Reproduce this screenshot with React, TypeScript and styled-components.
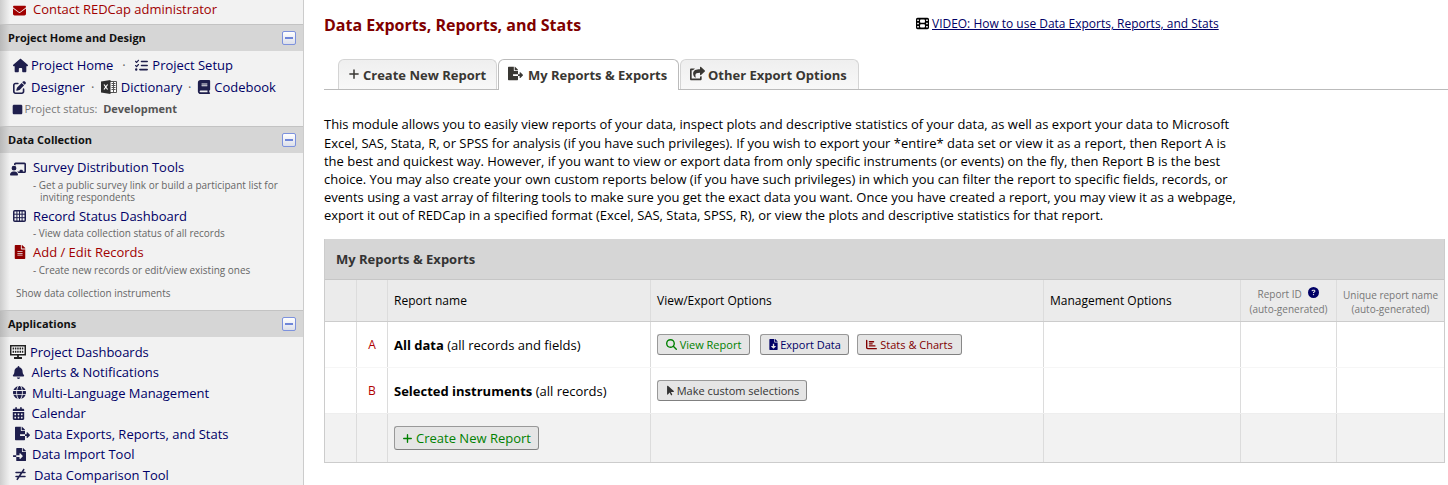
import React from 'react';
import styled, { createGlobalStyle } from 'styled-components';
import {
  FaEnvelope, FaHouse, FaListCheck, FaPenToSquare, FaBook, FaSquare, FaChalkboardUser,
  FaBell, FaGlobe, FaCalendarDays, FaNotEqual, FaPlus, FaChartBar,
  FaFilm, FaMagnifyingGlass, FaArrowPointer, FaCircleQuestion,
} from 'react-icons/fa6';
import { FaFileAlt, FaShareSquare, FaFileDownload, FaFileExport, FaFileImport } from 'react-icons/fa';

const Global = createGlobalStyle`
  * { box-sizing: border-box; }
  body { margin: 0; background: #fff; color: #000; overflow: hidden; font: 12.98px/18px "Open Sans", sans-serif; }
  svg { display: block; flex: none; }
`;

const Page = styled.div`
  display: flex;
  height: 485px;
  overflow: hidden;
`;

const Sidebar = styled.nav`
  width: 304px;
  flex: none;
  border-right: 1px solid #ccc;
  background: #f2f2f2;
  background-image: linear-gradient(to right, #cdcdcd, #f2f2f2 10px);
`;

const SectionHead = styled.h2`
  display: flex;
  align-items: center;
  justify-content: space-between;
  height: 27px;
  margin: 0;
  padding: 0 7px 1px 8px;
  border-top: 1px solid #c3c3c3;
  background: linear-gradient(to right, #b9b9b9, #d6d6d6 10px);
  font-size: 11px;
  font-weight: 700;
  color: #111;
`;

const Collapse = styled.span`
  display: flex;
  align-items: center;
  justify-content: center;
  width: 14px;
  height: 14px;
  margin-top: 1px;
  border: 1px solid #7d92dd;
  border-radius: 2px;
  background: linear-gradient(#fff, #dcdfea);
  &::after { content: ''; width: 8px; height: 2px; background: #6f86d8; }
`;

const SectionBody = styled.div<{ $top: number; $height: number }>`
  height: ${(p) => p.$height}px;
  padding-top: ${(p) => p.$top}px;
`;

const Row = styled.div<{ $h?: number }>`
  display: flex;
  align-items: center;
  height: ${(p) => p.$h ?? 20.5}px;
  white-space: nowrap;
`;

const Slot = styled.span<{ $x: number; $w: number; $color?: string; $dy?: number }>`
  display: flex;
  width: ${(p) => p.$w}px;
  padding-left: ${(p) => p.$x}px;
  margin-top: ${(p) => p.$dy ?? 0}px;
  flex: none;
  color: ${(p) => p.$color ?? '#1f1f4d'};
`;

const Link = styled.a<{ $red?: boolean }>`
  color: ${(p) => (p.$red ? '#a00000' : '#000066')};
`;

const Dot = styled.span<{ $w: number }>`
  width: ${(p) => p.$w}px;
  text-align: center;
  color: #666;
`;

const Status = styled.span`
  font-size: 11px;
  color: #777;
  b { margin-left: 3px; color: #555; }
`;

const Note = styled.p<{ $x?: number; $top?: number; $bottom?: number }>`
  margin: ${(p) => p.$top ?? 0}px 0 ${(p) => p.$bottom ?? 0}px ${(p) => p.$x ?? 40}px;
  text-indent: ${(p) => (p.$x ? 0 : -7)}px;
  font-size: 9.97px;
  line-height: 12px;
  color: #666;
`;

const Main = styled.main`
  flex: 1;
  min-width: 0;
  padding-left: 20px;
`;

const TitleBar = styled.header`
  display: flex;
  height: 59px;
  padding-top: 14px;
`;

const Title = styled.h1`
  width: 592px;
  margin: 0;
  font-size: 16px;
  line-height: 22px;
  font-weight: 700;
  color: #800000;
`;

const Video = styled.div`
  display: flex;
  align-items: flex-start;
  gap: 3px;
  font-size: 11.98px;
  line-height: 20px;
  svg { margin-top: 3px; }
  a { color: #000066; text-decoration: underline; }
`;

const Tabs = styled.div`
  display: flex;
  align-items: flex-end;
  height: 31px;
  padding-left: 14px;
  border-bottom: 1px solid #bbb;
`;

const Tab = styled.div<{ $w: number; $active?: boolean; $gap?: number }>`
  display: flex;
  align-items: center;
  gap: ${(p) => (p.$active ? 5 : 3)}px;
  width: ${(p) => p.$w}px;
  height: ${(p) => (p.$active ? 31 : 30)}px;
  margin-bottom: ${(p) => (p.$active ? -1 : 0)}px;
  margin-right: ${(p) => p.$gap ?? 0}px;
  padding: 0 0 ${(p) => (p.$active ? 1 : 0)}px 9px;
  border: 1px solid ${(p) => (p.$active ? '#bbb' : '#d4d4d4')};
  border-bottom: 0;
  border-radius: 6px 6px 0 0;
  background: ${(p) => (p.$active ? '#fff' : 'linear-gradient(#efefef, #f8f8f8)')};
  font-size: 13px;
  font-weight: 700;
  color: #393733;
  white-space: nowrap;
  svg { margin-top: -2px; }
`;

const Intro = styled.p`
  margin: 25px 0 14px;
  padding-top: 0.4px;
  height: 110px;
  line-height: 18.2px;
  white-space: nowrap;
`;

const Table = styled.section`
  width: 1121px;
  border: solid #ccc;
  border-width: 0 1px 1px;
`;

const TableTitle = styled.div`
  height: 41px;
  padding: 11px 11px 0;
  border-bottom: 1px solid #c6c6c6;
  background: #d6d6d6;
  font-size: 13px;
  font-weight: 700;
  color: #333;
`;

const Line = styled.div<{ $h: number; $bg?: string; $edge?: string; $head?: boolean }>`
  display: grid;
  grid-template-columns: 32px 31px 263px 393px 197px 96px 107px;
  height: ${(p) => p.$h}px;
  border-bottom: ${(p) => (p.$edge ? `1px solid ${p.$edge}` : '0')};
  background: ${(p) => p.$bg ?? '#fff'};
  font-size: ${(p) => (p.$head ? 12 : 13)}px;
`;

const Cell = styled.div<{ $letter?: boolean }>`
  display: flex;
  align-items: center;
  padding-left: ${(p) => (p.$letter ? 0 : 6)}px;
  justify-content: ${(p) => (p.$letter ? 'center' : 'flex-start')};
  color: ${(p) => (p.$letter ? '#b00000' : '#000')};
  font-size: ${(p) => (p.$letter ? '12px' : 'inherit')};
  border-right: 1px solid #dcdcdc;
  white-space: pre;
  &:last-child { border-right: 0; }
`;

const AutoCell = styled(Cell)<{ $lead?: number }>`
  flex-direction: column;
  justify-content: center;
  padding: 2px 0 0;
  font-size: 10px;
  line-height: ${(p) => p.$lead ?? 14}px;
  color: #777;
  span { display: flex; align-items: center; gap: 4px; }
  svg { color: #000066; margin-top: -3px; }
`;

const Button = styled.button<{ $w: number; $color: string; $mr?: number; $big?: boolean; $gap?: number }>`
  display: flex;
  align-items: center;
  justify-content: center;
  gap: ${(p) => p.$gap ?? 3}px;
  width: ${(p) => p.$w}px;
  height: ${(p) => (p.$big ? 24 : 21)}px;
  margin: 0 ${(p) => p.$mr ?? 0}px 0 0;
  padding: 0;
  border: 1px solid #999;
  border-bottom-color: #808080;
  border-right-color: #888;
  border-radius: 3px;
  background: #e5e5e5;
  color: ${(p) => p.$color};
  font-family: inherit;
  font-size: ${(p) => (p.$big ? 13 : 11)}px;
  line-height: 16px;
  white-space: nowrap;
`;

const ExcelIcon = () => (
  <svg width="16" height="14" viewBox="0 0 16 14">
    <path d="M9 1.5h6.5v11H9" fill="#fff" stroke="#555" />
    <path d="M10.5 3.5h4M10.5 5.5h4M10.5 7.5h4M10.5 9.5h4M12.5 2v10" stroke="#555" />
    <path d="M0 1.4 9.5 0v14L0 12.6z" fill="#2d2d2d" />
    <path d="m3 4.5 3.6 5M6.6 4.5 3 9.5" stroke="#fff" strokeWidth="1.2" />
  </svg>
);

const GridIcon = () => (
  <svg width="13" height="12" viewBox="0 0 13 12">
    <rect x="0.75" y="0.75" width="11.5" height="10.5" rx="1" fill="none" stroke="#1f1f4d" strokeWidth="1.5" />
    <path d="M1 4.2h11M1 7.7h11M3.9 1v10M6.5 1v10M9.1 1v10" stroke="#1f1f4d" strokeWidth="1" />
  </svg>
);

const MonitorIcon = () => (
  <svg width="16" height="14" viewBox="0 0 16 14">
    <rect x="0.75" y="0.75" width="14.5" height="9" fill="#fff" stroke="#222" strokeWidth="1.5" />
    <path d="M2.6 3.5h11M2.6 6.8h11" stroke="#222" strokeWidth="2" strokeDasharray="1.5 0.8" />
    <path d="M8 9.5v3M4 13h8" stroke="#222" strokeWidth="1.8" />
  </svg>
);

const intro = [
  'This module allows you to easily view reports of your data, inspect plots and descriptive statistics of your data, as well as export your data to Microsoft',
  'Excel, SAS, Stata, R, or SPSS for analysis (if you have such privileges). If you wish to export your *entire* data set or view it as a report, then Report A is',
  'the best and quickest way. However, if you want to view or export data from only specific instruments (or events) on the fly, then Report B is the best',
  'choice. You may also create your own custom reports below (if you have such privileges) in which you can filter the report to specific fields, records, or',
  'events using a vast array of filtering tools to make sure you get the exact data you want. Once you have created a report, you may view it as a webpage,',
  'export it out of REDCap in a specified format (Excel, SAS, Stata, SPSS, R), or view the plots and descriptive statistics for that report.',
];

const apps: { icon: React.ReactNode; x: number; w: number; label: string }[] = [
  { icon: <MonitorIcon />, x: 10, w: 30, label: 'Project Dashboards' },
  { icon: <FaBell size={13} />, x: 12, w: 31.5, label: 'Alerts & Notifications' },
  { icon: <FaGlobe size={13} />, x: 13, w: 32, label: 'Multi-Language Management' },
  { icon: <FaCalendarDays size={13} />, x: 12, w: 31.5, label: 'Calendar' },
  { icon: <FaFileExport size={15} />, x: 15, w: 34, label: 'Data Exports, Reports, and Stats' },
  { icon: <FaFileImport size={13} />, x: 13, w: 32, label: 'Data Import Tool' },
  { icon: <FaNotEqual size={13} />, x: 14, w: 34, label: 'Data Comparison Tool' },
];

const Section = ({ title }: { title: string }) => (
  <SectionHead>{title}<Collapse /></SectionHead>
);

export default function App() {
  return (
    <Page>
      <Global />
      <Sidebar>
        <SectionBody $top={0} $height={24}>
          <Row $h={18}>
            <Slot $x={13} $w={33} $dy={2} $color="#a00000"><FaEnvelope size={13} /></Slot>
            <Link $red>Contact REDCap administrator</Link>
          </Row>
        </SectionBody>
        <Section title="Project Home and Design" />
        <SectionBody $top={3} $height={75}>
          <Row $h={22}>
            <Slot $x={13} $w={31}><FaHouse size={15} /></Slot>
            <Link>Project Home</Link><Dot $w={21.5}>·</Dot>
            <Slot $x={0} $w={17.5}><FaListCheck size={13} /></Slot>
            <Link>Project Setup</Link>
          </Row>
          <Row $h={22}>
            <Slot $x={13} $w={31}><FaPenToSquare size={13} /></Slot>
            <Link>Designer</Link><Dot $w={16}>·</Dot>
            <Slot $x={0} $w={20}><ExcelIcon /></Slot>
            <Link>Dictionary</Link><Dot $w={15}>·</Dot>
            <Slot $x={0} $w={17}><FaBook size={14} /></Slot>
            <Link>Codebook</Link>
          </Row>
          <Row $h={22}>
            <Slot $x={12} $w={24.5}><FaSquare size={11} /></Slot>
            <Status>Project status: <b>Development</b></Status>
          </Row>
        </SectionBody>
        <Section title="Data Collection" />
        <SectionBody $top={4} $height={157}>
          <Row $h={20}>
            <Slot $x={10} $w={33} $dy={3}><FaChalkboardUser size={16} /></Slot>
            <Link>Survey Distribution Tools</Link>
          </Row>
          <Note $top={2} $bottom={3}>- Get a public survey link or build a participant list for<br />inviting respondents</Note>
          <Row $h={20}>
            <Slot $x={13} $w={33}><GridIcon /></Slot>
            <Link>Record Status Dashboard</Link>
          </Row>
          <Note $top={1} $bottom={3}>- View data collection status of all records</Note>
          <Row $h={20}>
            <Slot $x={13} $w={33} $color="#900000"><FaFileAlt size={14} /></Slot>
            <Link $red>Add / Edit Records</Link>
          </Row>
          <Note $top={2} $bottom={11}>- Create new records or edit/view existing ones</Note>
          <Note $x={16}>Show data collection instruments</Note>
        </SectionBody>
        <Section title="Applications" />
        <SectionBody $top={4.5} $height={150}>
          {apps.map((a) => (
            <Row key={a.label}>
              <Slot $x={a.x} $w={a.w}>{a.icon}</Slot>
              <Link>{a.label}</Link>
            </Row>
          ))}
        </SectionBody>
      </Sidebar>

      <Main>
        <TitleBar>
          <Title>Data Exports, Reports, and Stats</Title>
          <Video><FaFilm size={13} /><a>VIDEO: How to use Data Exports, Reports, and Stats</a></Video>
        </TitleBar>
        <Tabs>
          <Tab $w={159} $gap={1}><FaPlus size={12} />Create New Report</Tab>
          <Tab $w={181} $active $gap={1}><FaFileExport size={15} />My Reports &amp; Exports</Tab>
          <Tab $w={179}><FaShareSquare size={15} />Other Export Options</Tab>
        </Tabs>
        <Intro>
          {intro.map((line) => <React.Fragment key={line}>{line}<br /></React.Fragment>)}
        </Intro>
        <Table>
          <TableTitle>My Reports &amp; Exports</TableTitle>
          <Line $h={42} $bg="#ebebeb" $edge="#ccc" $head>
            <Cell /><Cell />
            <Cell>Report name</Cell>
            <Cell>View/Export Options</Cell>
            <Cell>Management Options</Cell>
            <AutoCell $lead={15}><span>Report ID <FaCircleQuestion size={11} /></span>(auto-generated)</AutoCell>
            <AutoCell><span>Unique report name</span>(auto-generated)</AutoCell>
          </Line>
          <Line $h={46} $edge="#f6f6f6">
            <Cell /><Cell $letter>A</Cell>
            <Cell><b>All data</b> (all records and fields)</Cell>
            <Cell>
              <Button $w={93} $color="#008000" $mr={10}><FaMagnifyingGlass size={11} />View Report</Button>
              <Button $w={89} $color="#000066" $mr={8} $gap={1}><FaFileDownload size={11} />Export Data</Button>
              <Button $w={105} $color="#800000"><FaChartBar size={11} />Stats &amp; Charts</Button>
            </Cell>
            <Cell /><Cell /><Cell />
          </Line>
          <Line $h={46} $edge="#eee">
            <Cell /><Cell $letter>B</Cell>
            <Cell><b>Selected instruments</b> (all records)</Cell>
            <Cell><Button $w={150} $color="#333" $gap={1}><FaArrowPointer size={11} />Make custom selections</Button></Cell>
            <Cell /><Cell /><Cell />
          </Line>
          <Line $h={48} $bg="#f2f2f2">
            <Cell /><Cell />
            <Cell><Button $big $w={145} $color="#008000"><FaPlus size={11} />Create New Report</Button></Cell>
            <Cell /><Cell /><Cell /><Cell />
          </Line>
        </Table>
      </Main>
    </Page>
  );
}
